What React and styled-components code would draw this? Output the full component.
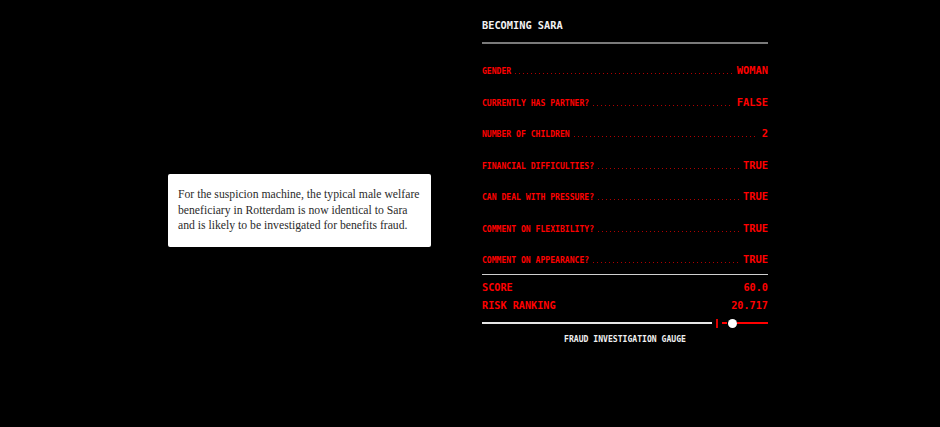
import React from "react";
import styled, { createGlobalStyle } from "styled-components";

const GlobalStyle = createGlobalStyle`
  html, body {
    margin: 0;
    padding: 0;
    background: #000;
  }
`;

const rows = [
  { label: "Gender", value: "Woman" },
  { label: "Currently has partner?", value: "False" },
  { label: "Number of children", value: "2" },
  { label: "Financial difficulties?", value: "True" },
  { label: "Can deal with pressure?", value: "True" },
  { label: "Comment on flexibility?", value: "True" },
  { label: "Comment on appearance?", value: "True" },
];

const App = () => {
  return (
    <>
      <GlobalStyle />
      <Page>
        <Left>
          <Caption>
            For the suspicion machine, the typical male welfare
            <br />
            beneficiary in Rotterdam is now identical to Sara
            <br />
            and is likely to be investigated for benefits fraud.
          </Caption>
        </Left>
        <Panel>
          <Heading>Becoming Sara</Heading>
          <HeadRule />
          <RowList>
            {rows.map((r) => (
              <Row key={r.label}>
                <Label>{r.label}</Label>
                <Leader />
                <Value>{r.value}</Value>
              </Row>
            ))}
          </RowList>
          <Rule />
          <Stat>
            <span>Score</span>
            <span>60.0</span>
          </Stat>
          <Stat $gap>
            <span>Risk ranking</span>
            <span>20.717</span>
          </Stat>
          <Gauge>
            <Track />
            <Tick />
            <Dash />
            <Knob />
            <RedTrack />
          </Gauge>
          <GaugeLabel>Fraud investigation gauge</GaugeLabel>
        </Panel>
      </Page>
    </>
  );
};

export default App;

const Page = styled.div`
  display: flex;
  width: 940px;
  height: 427px;
  background: #000;
  padding-left: 168px;
  box-sizing: border-box;
  gap: 51px;
`;

const Left = styled.div`
  display: flex;
  align-items: center;
  width: 263px;
  padding-bottom: 6px;
`;

const Caption = styled.div`
  width: 100%;
  box-sizing: border-box;
  background: #fff;
  border-radius: 2px;
  padding: 13px 6px 13px 10px;
  color: #2b2b2b;
  font-family: "Liberation Serif", serif;
  font-size: 11.7px;
  line-height: 15.6px;
  white-space: nowrap;
`;

const Panel = styled.div`
  width: 286px;
  display: flex;
  flex-direction: column;
  padding-top: 19px;
  font-family: "DejaVu Sans Mono", "Liberation Mono", monospace;
  font-weight: bold;
  text-transform: uppercase;
`;

const Heading = styled.div`
  color: #f2f2f2;
  font-size: 10.3px;
  line-height: 12px;
`;

const HeadRule = styled.div`
  height: 2px;
  background: #7a7a7a;
  margin-top: 11px;
`;

const RowList = styled.div`
  display: flex;
  flex-direction: column;
  gap: 19.5px;
  margin-top: 20px;
`;

const Row = styled.div`
  display: flex;
  align-items: baseline;
  height: 12px;
`;

const Label = styled.span`
  color: #f00;
  font-size: 8.1px;
  line-height: 12px;
  white-space: nowrap;
`;

const Leader = styled.span`
  flex: 1;
  height: 1px;
  margin: 0 4px;
  background-image: linear-gradient(to right, #b00000 1px, transparent 1px);
  background-size: 4px 1px;
`;

const Value = styled.span`
  color: #f00;
  font-size: 10.4px;
  line-height: 12px;
`;

const Rule = styled.div`
  height: 1px;
  background: #cfcfcf;
  margin-top: 9px;
`;

const Stat = styled.div`
  display: flex;
  justify-content: space-between;
  color: #f00;
  font-size: 10.2px;
  line-height: 12px;
  margin-top: ${(p) => (p.$gap ? "6px" : "7px")};
`;

const Gauge = styled.div`
  display: flex;
  align-items: center;
  height: 10px;
  margin-top: 6px;
`;

const Track = styled.div`
  flex: 1;
  height: 2px;
  background: #e6e6e6;
  margin-right: 4px;
`;

const Tick = styled.div`
  width: 2px;
  height: 9px;
  background: #e00000;
  margin-right: 4px;
`;

const Dash = styled.div`
  width: 5px;
  height: 2px;
  background: #f00;
  margin-right: 1px;
`;

const Knob = styled.div`
  width: 9px;
  height: 9px;
  border-radius: 50%;
  background: #fff;
`;

const RedTrack = styled.div`
  width: 31px;
  height: 2px;
  background: #f00;
`;

const GaugeLabel = styled.div`
  text-align: center;
  color: #f0f0f0;
  font-size: 8.1px;
  line-height: 12px;
  margin-top: 5px;
`;
